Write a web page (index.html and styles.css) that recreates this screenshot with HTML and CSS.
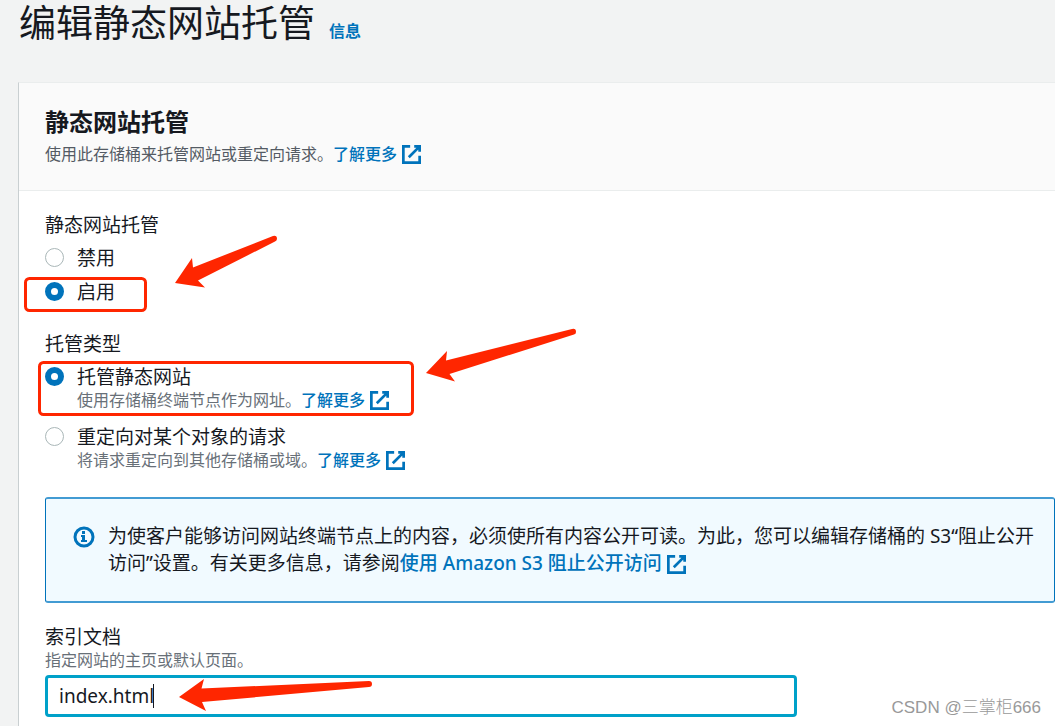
FILE: index.html
```
<!DOCTYPE html>
<html lang="zh-CN">
<head>
  <meta charset="UTF-8" />
  <meta name="viewport" content="width=device-width, initial-scale=1.0"/>
  <title>编辑静态网站托管</title>
  <link rel="stylesheet" href="styles.css">
</head>
<body>
  <!-- Shared icon -->
  <svg class="sprite" aria-hidden="true">
    <symbol id="external" viewBox="1 1 14 14">
      <path d="M10 2h4v4M6 10l8-8M14 9v5H2V2h5" fill="none" stroke="currentColor" stroke-width="2"/>
    </symbol>
  </svg>

  <header class="page-header">
    <h1>编辑静态网站托管</h1>
    <a class="info-link" href="#">信息</a>
  </header>

  <main class="card">
    <div class="card-header">
      <h2>静态网站托管</h2>
      <p>使用此存储桶来托管网站或重定向请求。<a href="#">了解更多<svg class="external"><use href="#external"/></svg></a></p>
    </div>

    <form class="card-body">
      <!-- Static website hosting -->
      <fieldset>
        <legend>静态网站托管</legend>
        <div class="choices">
          <div class="choice">
            <input type="radio" name="hosting" id="hosting-off">
            <label for="hosting-off">禁用</label>
          </div>
          <div class="choice">
            <input type="radio" name="hosting" id="hosting-on" checked>
            <label for="hosting-on">启用</label>
          </div>
        </div>
      </fieldset>

      <!-- Hosting type -->
      <fieldset>
        <legend>托管类型</legend>
        <div class="choices">
          <div class="choice">
            <input type="radio" name="type" id="type-site" checked>
            <div>
              <label for="type-site">托管静态网站</label>
              <p class="hint">使用存储桶终端节点作为网址。<a href="#">了解更多<svg class="external"><use href="#external"/></svg></a></p>
            </div>
          </div>
          <div class="choice">
            <input type="radio" name="type" id="type-redirect">
            <div>
              <label for="type-redirect">重定向对某个对象的请求</label>
              <p class="hint">将请求重定向到其他存储桶或域。<a href="#">了解更多<svg class="external"><use href="#external"/></svg></a></p>
            </div>
          </div>
        </div>
      </fieldset>

      <div class="alert">
        <svg class="info-icon" viewBox="0 0 22 22" aria-hidden="true">
          <circle cx="11" cy="11" r="9" fill="none" stroke="currentColor" stroke-width="3"/>
          <path d="M9 5h3v3H9zM8 9h4v5h2v2H8v-2h1v-3H8z" fill="currentColor"/>
        </svg>
        <p>为使客户能够访问网站终端节点上的内容，必须使所有内容公开可读。为此，您可以编辑存储桶的 S3“阻止公开访问”设置。有关更多信息，请参阅<a href="#">使用 Amazon S3 阻止公开访问<svg class="external"><use href="#external"/></svg></a></p>
      </div>

      <!-- Index document -->
      <div class="field">
        <label for="index-doc">索引文档</label>
        <p class="hint" id="index-hint">指定网站的主页或默认页面。</p>
        <div class="input-wrap">
          <input type="text" id="index-doc" value="index.html" aria-describedby="index-hint">
          <span class="caret"></span>
        </div>
      </div>
    </form>
  </main>

  <!-- Red marks drawn over the form -->
  <svg class="marks" width="600" height="726" aria-hidden="true">
    <g fill="none" stroke="#ff2600" stroke-width="3">
      <rect x="25.5" y="278.5" width="120" height="32" rx="4"/>
      <rect x="39.5" y="362.5" width="373" height="52" rx="4"/>
    </g>
    <g fill="#ff2600">
      <path d="M175 283L192 258L193 267.500L273 236Q277 235 277 239Q277 241 274 242L198 280.500L205 287.500Z"/>
      <path d="M426 373L447 351L446 360.500L572 329Q576 328 576 332Q576 334 574 334.500L449.500 374L455 381.500Z"/>
      <path d="M179 697L204 679L201.500 688.500L369 681Q372 681 372 684Q372 687 369 687L202 702L206 711Z"/>
    </g>
  </svg>
  <div class="watermark">CSDN @三掌柜666</div>
</body>
</html>
```

FILE: styles.css
```
* {
  margin: 0;
  padding: 0;
  box-sizing: border-box;
}
body {
  position: relative;
  display: flex;
  flex-direction: column;
  min-height: 100vh;
  background: #f2f3f3;
  color: #16191f;
  font-family: "Noto Sans", "Noto Sans CJK SC", sans-serif;
  font-size: 19px;
  line-height: 24px;
}
a {
  color: #0073bb;
  font-weight: 500;
  text-decoration: none;
}
a:hover {
  text-decoration: underline;
}
.sprite {
  position: absolute;
  width: 0;
  height: 0;
}
.external {
  width: 19px;
  height: 19px;
  margin-left: 5px;
  vertical-align: -4px;
}
.page-header {
  display: flex;
  align-items: baseline;
  gap: 14px;
  padding-left: 19px;
  margin-bottom: 36px;
}
h1 {
  font-size: 37px;
  font-weight: 400;
  line-height: 46px;
}
.info-link {
  font-size: 16px;
  font-weight: 700;
}

/* Card */
.card {
  flex: 1;
  margin-left: 18px;
  background: #fff;
  border-top: 1px solid #eaeded;
  border-left: 1px solid #c9cfd1;
}
.card-header {
  padding: 23px 26px 20px;
  background: #fafafa;
  border-bottom: 1px solid #eaeded;
}
h2 {
  font-size: 24px;
  font-weight: 700;
  line-height: 32px;
}
.card-header p {
  color: #545b64;
  font-size: 16px;
  line-height: 32px;
}
.card-body {
  padding: 22px 0 8px 26px;
}
fieldset {
  border: none;
  margin-bottom: 28px;
}
fieldset + fieldset,
.alert {
  margin-bottom: 22px;
}
.field label,
.choice label {
  display: block;
}
.choices {
  display: flex;
  flex-direction: column;
  gap: 10px;
  padding-top: 9px;
}
.choice {
  display: flex;
  align-items: flex-start;
  gap: 13px;
}
.choice input {
  appearance: none;
  width: 19px;
  height: 19px;
  margin-top: 2px;
  background: #fff;
  border: 1px solid #aab7b8;
  border-radius: 50%;
}
.choice input:checked {
  border: 6px solid #0073bb;
}
.hint {
  color: #687078;
  font-size: 16px;
  line-height: 22px;
}
.choice .hint {
  margin-bottom: 4px;
}

/* Info box */
.alert {
  display: flex;
  gap: 13px;
  padding: 24px 12px 24px 27px;
  background: #f1faff;
  border: 1px solid #0073bb;
  border-width: 2px 1px;
  border-color: #429bd3 #0073bb;
  border-radius: 3px;
  line-height: 27px;
}
.info-icon {
  flex: none;
  width: 22px;
  height: 22px;
  margin-top: 3px;
  color: #0073bb;
}

/* Text input */
.input-wrap {
  position: relative;
  max-width: 752px;
  margin-top: 4px;
}
.input-wrap input {
  display: block;
  width: 100%;
  height: 42px;
  padding: 0 11px;
  color: inherit;
  font: inherit;
  background: #fff;
  border: 3px solid #00a1c9;
  border-radius: 4px;
  outline: none;
}
.caret {
  position: absolute;
  top: 9px;
  left: 108px;
  width: 1px;
  height: 24px;
  background: #16191f;
}

/* Overlays */
.marks {
  position: absolute;
  top: 0;
  left: 0;
  pointer-events: none;
}
.watermark {
  position: absolute;
  right: 14px;
  bottom: 6px;
  color: #999;
  font-family: "Liberation Sans", "Noto Sans CJK SC", sans-serif;
  font-size: 17px;
  font-weight: 300;
}
```
